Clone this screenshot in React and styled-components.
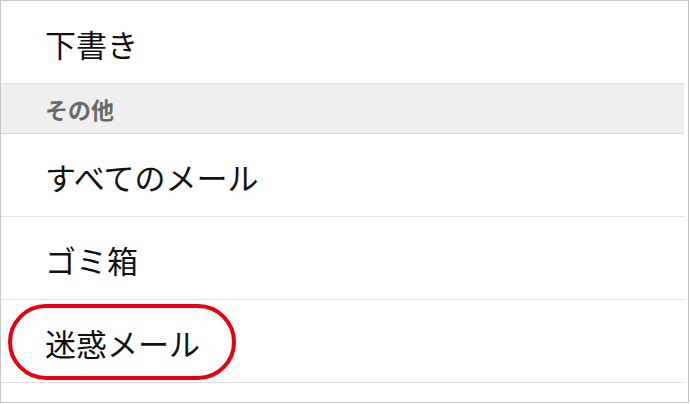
import React from 'react'
import styled, { createGlobalStyle } from 'styled-components'

const GlobalStyle = createGlobalStyle`
  html, body {
    margin: 0;
    padding: 0;
    background: #ffffff;
  }
  body {
    font-family: "Noto Sans CJK JP", "Noto Sans", sans-serif;
  }
`

const Frame = styled.div`
  box-sizing: border-box;
  width: 689px;
  height: 403px;
  border: 1px solid #c6c6c6;
  background: #ffffff;
  padding-right: 4px;
  overflow: hidden;
`

const List = styled.div`
  display: flex;
  flex-direction: column;
`

const Row = styled.div`
  position: relative;
  box-sizing: border-box;
  height: ${p => p.$first ? 82 : 83}px;
  display: flex;
  align-items: center;
  padding-left: 44px;
  padding-top: 2px;
  border-bottom: ${p => p.$first ? 'none' : '1px solid #e2e2e2'};
  font-size: 31px;
  color: #111111;
`

const SectionHeader = styled.div`
  box-sizing: border-box;
  height: 51px;
  display: flex;
  align-items: center;
  padding-left: 44px;
  background: #efefef;
  border-top: 1px solid #dedede;
  border-bottom: 1px solid #d8d8d8;
  font-size: 23px;
  font-weight: 700;
  color: #6a6a6a;
`

const Highlight = styled.div`
  position: absolute;
  left: 7px;
  top: 4px;
  width: 228px;
  height: 76px;
  box-sizing: border-box;
  border: 4px solid #e8000f;
  border-radius: 38px;
  pointer-events: none;
`

const App = () => {
  return (
    <>
      <GlobalStyle />
      <Frame>
        <List>
          <Row $first>下書き</Row>
          <SectionHeader>その他</SectionHeader>
          <Row>すべてのメール</Row>
          <Row>ゴミ箱</Row>
          <Row>
            迷惑メール
            <Highlight />
          </Row>
        </List>
      </Frame>
    </>
  )
}

export default App
